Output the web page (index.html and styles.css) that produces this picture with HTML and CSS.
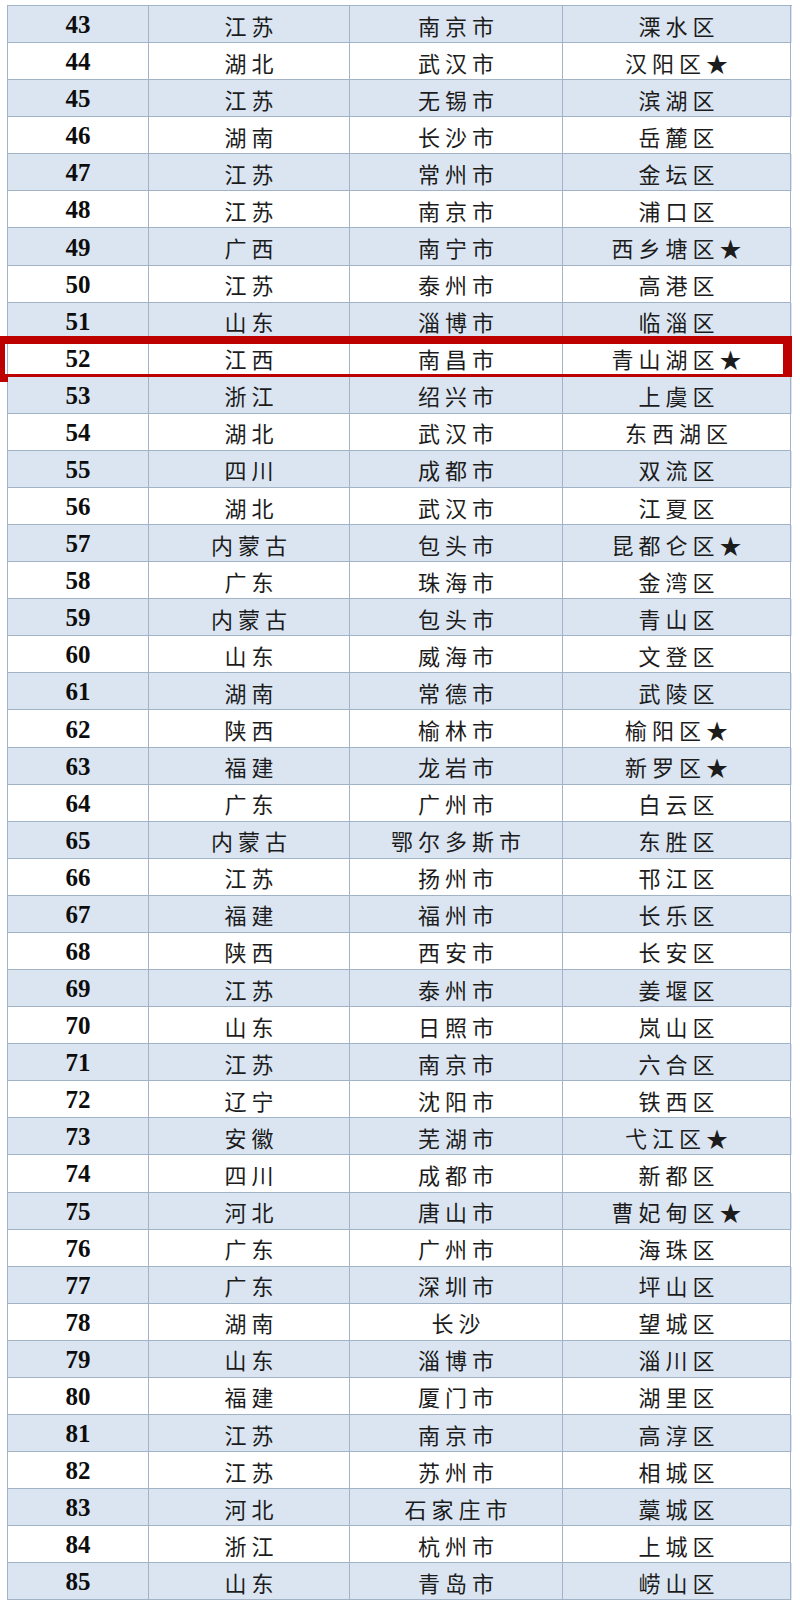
FILE: index.html
```html
<!DOCTYPE html>
<html lang="zh-CN">
<head>
<meta charset="utf-8">
<title>排名</title>
<link rel="stylesheet" href="styles.css">
</head>
<body>
<div class="table">
<div class="row"><div class="c n">43</div><div class="c t">江苏</div><div class="c t">南京市</div><div class="c t">溧水区</div></div>
<div class="row"><div class="c n">44</div><div class="c t">湖北</div><div class="c t">武汉市</div><div class="c t">汉阳区★</div></div>
<div class="row"><div class="c n">45</div><div class="c t">江苏</div><div class="c t">无锡市</div><div class="c t">滨湖区</div></div>
<div class="row"><div class="c n">46</div><div class="c t">湖南</div><div class="c t">长沙市</div><div class="c t">岳麓区</div></div>
<div class="row"><div class="c n">47</div><div class="c t">江苏</div><div class="c t">常州市</div><div class="c t">金坛区</div></div>
<div class="row"><div class="c n">48</div><div class="c t">江苏</div><div class="c t">南京市</div><div class="c t">浦口区</div></div>
<div class="row"><div class="c n">49</div><div class="c t">广西</div><div class="c t">南宁市</div><div class="c t">西乡塘区★</div></div>
<div class="row"><div class="c n">50</div><div class="c t">江苏</div><div class="c t">泰州市</div><div class="c t">高港区</div></div>
<div class="row"><div class="c n">51</div><div class="c t">山东</div><div class="c t">淄博市</div><div class="c t">临淄区</div></div>
<div class="row hl"><div class="c n">52</div><div class="c t">江西</div><div class="c t">南昌市</div><div class="c t">青山湖区★</div></div>
<div class="row"><div class="c n">53</div><div class="c t">浙江</div><div class="c t">绍兴市</div><div class="c t">上虞区</div></div>
<div class="row"><div class="c n">54</div><div class="c t">湖北</div><div class="c t">武汉市</div><div class="c t">东西湖区</div></div>
<div class="row"><div class="c n">55</div><div class="c t">四川</div><div class="c t">成都市</div><div class="c t">双流区</div></div>
<div class="row"><div class="c n">56</div><div class="c t">湖北</div><div class="c t">武汉市</div><div class="c t">江夏区</div></div>
<div class="row"><div class="c n">57</div><div class="c t">内蒙古</div><div class="c t">包头市</div><div class="c t">昆都仑区★</div></div>
<div class="row"><div class="c n">58</div><div class="c t">广东</div><div class="c t">珠海市</div><div class="c t">金湾区</div></div>
<div class="row"><div class="c n">59</div><div class="c t">内蒙古</div><div class="c t">包头市</div><div class="c t">青山区</div></div>
<div class="row"><div class="c n">60</div><div class="c t">山东</div><div class="c t">威海市</div><div class="c t">文登区</div></div>
<div class="row"><div class="c n">61</div><div class="c t">湖南</div><div class="c t">常德市</div><div class="c t">武陵区</div></div>
<div class="row"><div class="c n">62</div><div class="c t">陕西</div><div class="c t">榆林市</div><div class="c t">榆阳区★</div></div>
<div class="row"><div class="c n">63</div><div class="c t">福建</div><div class="c t">龙岩市</div><div class="c t">新罗区★</div></div>
<div class="row"><div class="c n">64</div><div class="c t">广东</div><div class="c t">广州市</div><div class="c t">白云区</div></div>
<div class="row"><div class="c n">65</div><div class="c t">内蒙古</div><div class="c t">鄂尔多斯市</div><div class="c t">东胜区</div></div>
<div class="row"><div class="c n">66</div><div class="c t">江苏</div><div class="c t">扬州市</div><div class="c t">邗江区</div></div>
<div class="row"><div class="c n">67</div><div class="c t">福建</div><div class="c t">福州市</div><div class="c t">长乐区</div></div>
<div class="row"><div class="c n">68</div><div class="c t">陕西</div><div class="c t">西安市</div><div class="c t">长安区</div></div>
<div class="row"><div class="c n">69</div><div class="c t">江苏</div><div class="c t">泰州市</div><div class="c t">姜堰区</div></div>
<div class="row"><div class="c n">70</div><div class="c t">山东</div><div class="c t">日照市</div><div class="c t">岚山区</div></div>
<div class="row"><div class="c n">71</div><div class="c t">江苏</div><div class="c t">南京市</div><div class="c t">六合区</div></div>
<div class="row"><div class="c n">72</div><div class="c t">辽宁</div><div class="c t">沈阳市</div><div class="c t">铁西区</div></div>
<div class="row"><div class="c n">73</div><div class="c t">安徽</div><div class="c t">芜湖市</div><div class="c t">弋江区★</div></div>
<div class="row"><div class="c n">74</div><div class="c t">四川</div><div class="c t">成都市</div><div class="c t">新都区</div></div>
<div class="row"><div class="c n">75</div><div class="c t">河北</div><div class="c t">唐山市</div><div class="c t">曹妃甸区★</div></div>
<div class="row"><div class="c n">76</div><div class="c t">广东</div><div class="c t">广州市</div><div class="c t">海珠区</div></div>
<div class="row"><div class="c n">77</div><div class="c t">广东</div><div class="c t">深圳市</div><div class="c t">坪山区</div></div>
<div class="row"><div class="c n">78</div><div class="c t">湖南</div><div class="c t">长沙</div><div class="c t">望城区</div></div>
<div class="row"><div class="c n">79</div><div class="c t">山东</div><div class="c t">淄博市</div><div class="c t">淄川区</div></div>
<div class="row"><div class="c n">80</div><div class="c t">福建</div><div class="c t">厦门市</div><div class="c t">湖里区</div></div>
<div class="row"><div class="c n">81</div><div class="c t">江苏</div><div class="c t">南京市</div><div class="c t">高淳区</div></div>
<div class="row"><div class="c n">82</div><div class="c t">江苏</div><div class="c t">苏州市</div><div class="c t">相城区</div></div>
<div class="row"><div class="c n">83</div><div class="c t">河北</div><div class="c t">石家庄市</div><div class="c t">藁城区</div></div>
<div class="row"><div class="c n">84</div><div class="c t">浙江</div><div class="c t">杭州市</div><div class="c t">上城区</div></div>
<div class="row"><div class="c n">85</div><div class="c t">山东</div><div class="c t">青岛市</div><div class="c t">崂山区</div></div>
</div>
</body>
</html>
```
FILE: styles.css
```css
html, body {
  margin: 0;
  padding: 0;
  background: #ffffff;
}
body {
  padding: 5px 0 0 7px;
}
.table {
  width: 784px;
  border-top: 1px solid #a3b3c7;
  border-left: 1px solid #a3b3c7;
}
.row {
  display: grid;
  grid-template-columns: 141px 201px 213px 228px;
  height: 37.09px;
  background: #ffffff;
  position: relative;
}
.row:nth-child(odd) {
  background: #dbe5f1;
}
.c {
  box-sizing: border-box;
  border-right: 1px solid #a3b3c7;
  border-bottom: 1px solid #a3b3c7;
  display: flex;
  align-items: center;
  justify-content: center;
  color: #151515;
  white-space: nowrap;
}
.n {
  font-family: "Liberation Serif", "Times New Roman", serif;
  font-weight: bold;
  font-size: 25px;
  color: #0d0d0d;
  padding-top: 2px;
}
.t {
  font-family: "Liberation Serif", "Noto Sans CJK SC", sans-serif;
  font-size: 22px;
  letter-spacing: 5px;
  padding-left: 5px;
  padding-top: 1px;
  color: #1c1c1c;
}
.hl::after {
  content: "";
  position: absolute;
  left: -8px;
  top: -4px;
  width: 792px;
  height: 46px;
  box-sizing: border-box;
  border-style: solid;
  border-color: #bd0000;
  border-width: 8px 9px 8px 5px;
  pointer-events: none;
}
```
